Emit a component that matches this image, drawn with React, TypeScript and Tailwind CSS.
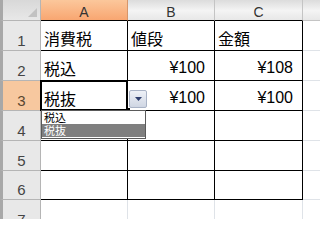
import React from "react";

/* DATA */
const rows: { a: string; b: string; c: string }[] = [
  { a: "消費税", b: "値段", c: "金額" },
  { a: "税込", b: "¥100", c: "¥108" },
  { a: "税抜", b: "¥100", c: "¥100" },
  { a: "", b: "", c: "" },
  { a: "", b: "", c: "" },
  { a: "", b: "", c: "" },
];

const jp = { fontFamily: '"Noto Sans CJK JP", "Liberation Sans", sans-serif' };
const num = { fontFamily: '"Liberation Sans", "Noto Sans CJK JP", sans-serif' };

const isNum = (s: string) => s.startsWith("¥");

/* CELL */
const Cell = ({ text, width }: { text: string; width: string }) => (
  <div
    className={`${width} h-full flex items-end border-r border-b border-black pb-[4px] px-[3px] text-[16px] leading-none text-black ${
      isNum(text) ? "justify-end pr-[9px] text-[15px]" : "justify-start"
    }`}
    style={isNum(text) ? num : jp}
  >
    {text}
  </div>
);

/* DROPDOWN */
const Dropdown = () => (
  <>
    {/* selection border */}
    <div className="absolute -left-px -top-px w-[88px] h-[31px] border-2 border-black pointer-events-none" />
    <div className="absolute left-[85px] top-[27px] w-[4px] h-[4px] bg-black" />
    {/* arrow button */}
    <div className="absolute left-[88px] top-[9px] w-[18px] h-[18px] rounded-[2px] border border-[#a9b3c6] bg-gradient-to-b from-[#eef1f7] to-[#cfd6e3] flex items-center justify-center">
      <svg width="7" height="4" viewBox="0 0 7 4">
        <path d="M0 0 L7 0 L3.5 4 Z" fill="#2f3f6e" />
      </svg>
    </div>
    {/* list */}
    <div className="absolute left-0 top-[29px] z-10 w-[105px] h-[29px] border border-[#5a5a5a] bg-white text-[11px] leading-none" style={jp}>
      <div className="h-[13px] px-[2px] flex items-center text-black">税込</div>
      <div className="h-[13px] px-[2px] flex items-center bg-[#7f7f7f] text-white">税抜</div>
    </div>
  </>
);

/* APP */
export default function App() {
  return (
    <div className="w-[320px] h-[219px] overflow-hidden bg-white flex flex-col">
      {/* COLUMN HEADERS */}
      <div className="flex h-[21px] shrink-0 bg-gradient-to-b from-[#dcdcdc] via-[#f4f4f4] to-[#e6e6e6] text-[14px] leading-none text-[#333]" style={num}>
        <div className="relative w-[41px] h-full border-l-[3px] border-l-[#a8a8a8] border-r border-b border-[#b5b5b5] bg-gradient-to-b from-[#d8d8d8] to-[#e8e8e8]">
          <svg className="absolute right-[3px] bottom-[3px]" width="9" height="9" viewBox="0 0 9 9">
            <path d="M9 0 L9 9 L0 9 Z" fill="#c2c2c2" />
          </svg>
        </div>
        <div className="w-[87px] h-full flex items-center justify-center pt-[3px] border-r border-b border-r-[#d6956a] border-b-black bg-gradient-to-b from-[#fbc79b] to-[#f8a671] text-[#333]">A</div>
        <div className="w-[87px] h-full flex items-center justify-center pt-[3px] border-r border-b border-r-[#c4c4c4] border-b-black">B</div>
        <div className="w-[88px] h-full flex items-center justify-center pt-[3px] border-r border-b border-r-[#c4c4c4] border-b-black">C</div>
        <div className="flex-1 h-full border-b border-[#c4c4c4]" />
      </div>

      {/* ROWS */}
      {rows.map((r, i) => (
        <div key={i} className={`flex shrink-0 ${i === 5 ? "h-[29px]" : "h-[30px]"}`}>
          <div
            className={`w-[41px] h-full flex items-end justify-center pb-[2px] border-l-[3px] border-l-[#a8a8a8] border-r border-b border-[#b5b5b5] text-[15px] leading-none ${
              i === 2 ? "bg-[#f7c89f] text-[#5a4630]" : "bg-[#e8e8e8] text-[#444]"
            }`}
            style={num}
          >
            {i + 1}
          </div>
          <div className="relative h-full">
            <Cell text={r.a} width="w-[87px]" />
            {i === 2 && <Dropdown />}
          </div>
          <Cell text={r.b} width="w-[87px]" />
          <Cell text={r.c} width="w-[88px]" />
          <div className="flex-1 h-full border-b border-[#dfe3e8]" />
        </div>
      ))}

      {/* ROW 7 */}
      <div className="flex flex-1">
        <div className="w-[41px] h-full flex items-end justify-center border-l-[3px] border-l-[#a8a8a8] border-r border-[#b5b5b5] bg-[#e8e8e8] text-[15px] leading-none text-[#444]" style={num}>
          <span className="translate-y-[8px]">7</span>
        </div>
        <div className="w-[87px] h-full border-r border-[#dfe3e8]" />
        <div className="w-[87px] h-full border-r border-[#dfe3e8]" />
        <div className="w-[88px] h-full border-r border-[#dfe3e8]" />
        <div className="flex-1 h-full" />
      </div>
    </div>
  );
}
